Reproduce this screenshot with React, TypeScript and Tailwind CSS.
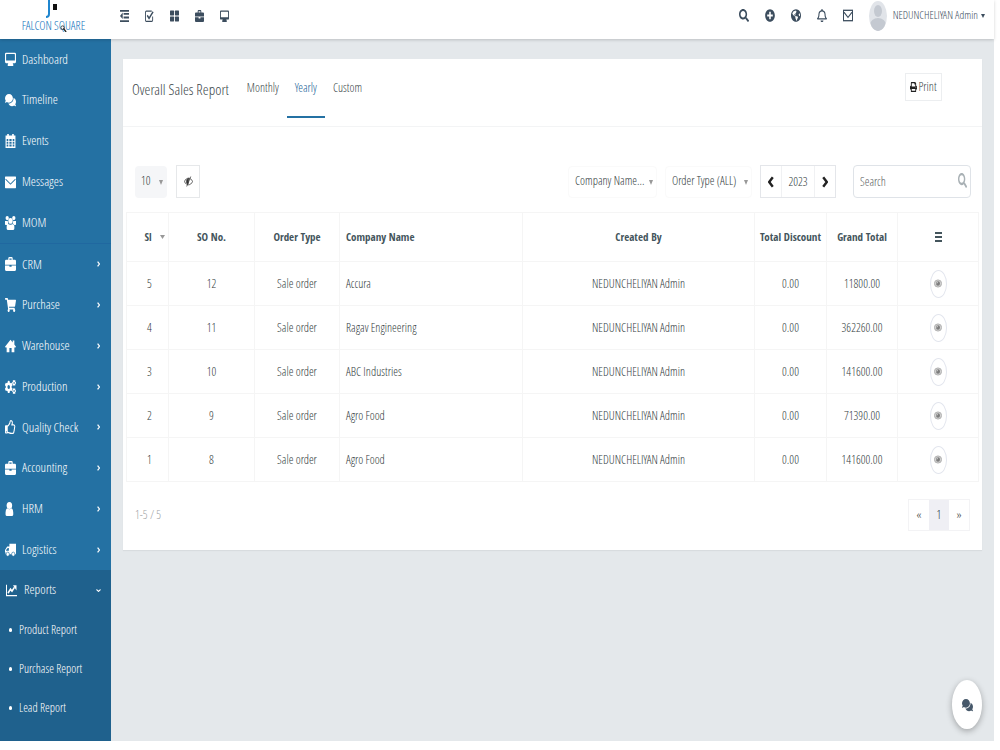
import React, { useState } from 'react';
import type { IconType } from 'react-icons';
import {
  FaCogs,
  FaComments,
  FaGlobeAmericas,
  FaPlusCircle,
  FaPrint,
  FaRegBell,
  FaRegThumbsUp,
  FaSearch,
  FaShoppingCart,
} from 'react-icons/fa';

type IconProps = { className?: string; preserveAspectRatio?: string };

interface MenuItem {
  label: string;
  icon: IconType | ((props: IconProps) => React.ReactElement);
}

interface SalesRow {
  sl: number;
  soNo: number;
  type: string;
  company: string;
  createdBy: string;
  discount: string;
  total: string;
}

function MonitorIcon(props: IconProps) {
  return (
    <svg viewBox="0 0 20 20" fill="currentColor" {...props}>
      <path
        fillRule="evenodd"
        d="M2 1h16a2 2 0 0 1 2 2v11a2 2 0 0 1-2 2h-4l1 2v2H5v-2l1-2H2a2 2 0 0 1-2-2V3a2 2 0 0 1 2-2zm1 2a1 1 0 0 0-1 1v8h16V4a1 1 0 0 0-1-1z"
      />
    </svg>
  );
}

function CalendarIcon(props: IconProps) {
  return (
    <svg viewBox="0 0 20 20" {...props}>
      <path
        fill="currentColor"
        fillRule="evenodd"
        d="M4 0h3v2h6V0h3v2h3v18H1V2h3zM3 7v3h3V7zm5 0v3h4V7zm6 0v3h3V7zM3 11v3h3v-3zm5 0v3h4v-3zm6 0v3h3v-3zM3 15v3h3v-3zm5 0v3h4v-3zm6 0v3h3v-3z"
      />
    </svg>
  );
}

function MailIcon(props: IconProps) {
  return (
    <svg viewBox="0 0 20 20" {...props}>
      <rect x="0" y="2" width="20" height="17" rx="1" fill="currentColor" />
      <path d="M1 6l9 7 9-7" fill="none" stroke="#2471a3" strokeWidth="1.5" />
    </svg>
  );
}

function MailOutlineIcon(props: IconProps) {
  return (
    <svg viewBox="0 0 20 20" fill="none" stroke="currentColor" strokeWidth="2" {...props}>
      <rect x="1" y="2" width="18" height="16" />
      <path d="M2 5l8 8 8-8" />
    </svg>
  );
}

function BriefcaseIcon(props: IconProps) {
  return (
    <svg viewBox="0 0 20 20" fill="currentColor" {...props}>
      <path
        fillRule="evenodd"
        d="M6 4V2a2 2 0 0 1 2-2h4a2 2 0 0 1 2 2v2h4a2 2 0 0 1 2 2v5H0V6a2 2 0 0 1 2-2zm2 0h4V2H8zM0 12h8v2h4v-2h8v6a2 2 0 0 1-2 2H2a2 2 0 0 1-2-2z"
      />
    </svg>
  );
}

function PeopleIcon(props: IconProps) {
  return (
    <svg viewBox="0 0 20 20" fill="currentColor" {...props}>
      <circle cx="4" cy="3" r="3" />
      <circle cx="16" cy="3" r="3" />
      <circle cx="10" cy="7" r="4" />
      <path d="M0 7h5l1 4-2 2H1q-1 0-1-2zM20 7h-5l-1 4 2 2h3q1 0 1-2zM5 11q5 3 10 0 2 1 2 4v3q0 2-2 2H5q-2 0-2-2v-3q0-3 2-4z" />
    </svg>
  );
}

function PersonIcon(props: IconProps) {
  return (
    <svg viewBox="0 0 20 20" fill="currentColor" {...props}>
      <ellipse cx="8" cy="5" rx="5" ry="5" />
      <path d="M4 9q4 3 8 0 3 1 3 6v3q0 2-2 2H3q-2 0-2-2v-3q0-5 3-6z" />
    </svg>
  );
}

function HomeIcon(props: IconProps) {
  return (
    <svg viewBox="0 0 20 20" fill="currentColor" {...props}>
      <path d="M10 1l4 4V2h3v6l3 3-1 1h-2v7h-5v-6H8v6H3v-7H1l-1-1z" />
    </svg>
  );
}

function TruckIcon(props: IconProps) {
  return (
    <svg viewBox="0 0 20 20" fill="currentColor" {...props}>
      <path fillRule="evenodd" d="M8 1h12v15H1v-2L0 13v-3l4-5h4zM7 7H5l-3 3v1h5z" />
      <circle cx="5" cy="16" r="3" stroke="#2471a3" />
      <circle cx="15" cy="16" r="3" stroke="#2471a3" />
    </svg>
  );
}

function ChartIcon(props: IconProps) {
  return (
    <svg viewBox="0 0 22 20" {...props}>
      <path d="M1 1v17h21" fill="none" stroke="currentColor" strokeWidth="2" />
      <path d="M4 14l5-6 3 3 5-6" fill="none" stroke="currentColor" strokeWidth="3" />
      <path d="M14 2h7v8z" fill="currentColor" />
    </svg>
  );
}

function DedentIcon(props: IconProps) {
  return (
    <svg viewBox="0 0 20 20" fill="currentColor" {...props}>
      <path d="M0 0h20v3H0zM8 5h12v3H8zM8 11h12v3H8zM0 17h20v3H0zM6 4v11L0 10z" />
    </svg>
  );
}

function CheckSquareIcon(props: IconProps) {
  return (
    <svg viewBox="0 0 20 20" fill="none" stroke="currentColor" {...props}>
      <path d="M17 11v6q0 2-2 2H3q-2 0-2-2V4q0-2 2-2h12" strokeWidth="2" />
      <path d="M5 9l4 5L18 3" strokeWidth="3" />
    </svg>
  );
}

function TilesIcon(props: IconProps) {
  return (
    <svg viewBox="0 0 20 20" fill="currentColor" {...props}>
      <rect x="0" y="1" width="9" height="8" rx="1" />
      <rect x="11" y="1" width="9" height="8" rx="1" />
      <rect x="0" y="11" width="9" height="8" rx="1" />
      <rect x="11" y="11" width="9" height="8" rx="1" />
    </svg>
  );
}

function MenuLinesIcon(props: IconProps) {
  return (
    <svg viewBox="0 0 7 10" fill="currentColor" {...props}>
      <path d="M0 0h7v2H0zM0 4h7v2H0zM0 8h7v2H0z" />
    </svg>
  );
}

function ArrowIcon(props: IconProps) {
  return (
    <svg viewBox="0 0 10 20" fill="none" stroke="currentColor" strokeWidth="4" {...props}>
      <path d="M2 2l6 8-6 8" />
    </svg>
  );
}

function Triangle(props: IconProps) {
  return (
    <svg viewBox="0 0 10 10" fill="currentColor" preserveAspectRatio="none" {...props}>
      <path d="M0 0h10L5 10z" />
    </svg>
  );
}

function EyeSlashIcon(props: IconProps) {
  return (
    <svg viewBox="0 0 20 20" fill="none" stroke="currentColor" {...props}>
      <path d="M1 10c4-8 14-8 18 0-4 8-14 8-18 0z" strokeWidth="1.5" />
      <path d="M11 4a6 6 0 0 0-5 9l3 2z" fill="currentColor" />
      <path d="M15 1L6 19" strokeWidth="1.5" />
    </svg>
  );
}

function EyeIcon(props: IconProps) {
  return (
    <svg viewBox="0 0 20 20" {...props}>
      <ellipse cx="10" cy="10" rx="9" ry="8" fill="#d3d3d3" stroke="#a9a9a9" strokeWidth="2" />
      <circle cx="10" cy="10" r="5" fill="#7d7d7d" />
      <path d="M10 7a3 3 0 0 0-3 3" stroke="#eee" strokeWidth="1.5" fill="none" />
    </svg>
  );
}

const mainMenu: MenuItem[] = [
  { label: 'Dashboard', icon: MonitorIcon },
  { label: 'Timeline', icon: FaComments },
  { label: 'Events', icon: CalendarIcon },
  { label: 'Messages', icon: MailIcon },
  { label: 'MOM', icon: PeopleIcon },
];

const moduleMenu: MenuItem[] = [
  { label: 'CRM', icon: BriefcaseIcon },
  { label: 'Purchase', icon: FaShoppingCart },
  { label: 'Warehouse', icon: HomeIcon },
  { label: 'Production', icon: FaCogs },
  { label: 'Quality Check', icon: FaRegThumbsUp },
  { label: 'Accounting', icon: BriefcaseIcon },
  { label: 'HRM', icon: PersonIcon },
  { label: 'Logistics', icon: TruckIcon },
];

const reportMenu = ['Product Report', 'Purchase Report', 'Lead Report'];

const quickLinks = [
  { label: 'Toggle menu', icon: DedentIcon },
  { label: 'Tasks', icon: CheckSquareIcon },
  { label: 'Apps', icon: TilesIcon },
  { label: 'Projects', icon: BriefcaseIcon },
  { label: 'Desktop', icon: MonitorIcon },
];

const userLinks = [
  { label: 'Search', icon: FaSearch },
  { label: 'Add', icon: FaPlusCircle },
  { label: 'Language', icon: FaGlobeAmericas },
  { label: 'Notifications', icon: FaRegBell },
  { label: 'Mail', icon: MailOutlineIcon },
];

const rows: SalesRow[] = [
  { sl: 5, soNo: 12, type: 'Sale order', company: 'Accura', createdBy: 'NEDUNCHELIYAN Admin', discount: '0.00', total: '11800.00' },
  { sl: 4, soNo: 11, type: 'Sale order', company: 'Ragav Engineering', createdBy: 'NEDUNCHELIYAN Admin', discount: '0.00', total: '362260.00' },
  { sl: 3, soNo: 10, type: 'Sale order', company: 'ABC Industries', createdBy: 'NEDUNCHELIYAN Admin', discount: '0.00', total: '141600.00' },
  { sl: 2, soNo: 9, type: 'Sale order', company: 'Agro Food', createdBy: 'NEDUNCHELIYAN Admin', discount: '0.00', total: '71390.00' },
  { sl: 1, soNo: 8, type: 'Sale order', company: 'Agro Food', createdBy: 'NEDUNCHELIYAN Admin', discount: '0.00', total: '141600.00' },
];

function Logo() {
  return (
    <a href="#" className="flex h-[39px] w-[111px] shrink-0 flex-col items-center bg-white pr-1 text-[#0f72bb]">
      <svg viewBox="0 0 20 19" className="h-[19px] w-5 shrink-0">
        <path d="M5 0v14q0 3-3 3" fill="none" stroke="#1f86cf" strokeWidth="2" />
        <rect x="9" y="4" width="4" height="6" fill="#111" />
      </svg>
      <span className="relative text-[12px] leading-[14px] whitespace-nowrap">
        FALCON SQUARE
        <svg viewBox="0 0 8 8" className="absolute top-[6px] left-[38px] h-[7px] w-[7px]">
          <circle cx="3" cy="3" r="2" fill="none" stroke="#333" />
          <path d="M4 4l3 4" stroke="#222" strokeWidth="1.5" />
        </svg>
      </span>
    </a>
  );
}

function SidebarLink({ item, arrow }: { item: MenuItem; arrow?: boolean }) {
  const Icon = item.icon;
  return (
    <li>
      <a href="#" className="flex h-full items-center pr-[11px] pl-[5px]">
        <Icon preserveAspectRatio="none" className="h-[14px] w-[11px] shrink-0" />
        <span className="ml-[6px] grow whitespace-nowrap">{item.label}</span>
        {arrow && <ArrowIcon preserveAspectRatio="none" className="h-[6px] w-[3px]" />}
      </a>
    </li>
  );
}

function Sidebar() {
  return (
    <nav className="flex w-[111px] shrink-0 flex-col bg-[#2471a3] text-[13px] text-white">
      <ul className="grid h-[205px] auto-rows-fr border-b border-[#2068a0]">
        {mainMenu.map((item) => (
          <SidebarLink key={item.label} item={item} />
        ))}
      </ul>
      <ul className="grid h-[326px] auto-rows-fr">
        {moduleMenu.map((item) => (
          <SidebarLink key={item.label} item={item} arrow />
        ))}
      </ul>
      <div className="grow bg-[#1f618d]">
        <a href="#" className="flex h-10 items-center pr-[11px] pl-[6px]">
          <ChartIcon preserveAspectRatio="none" className="h-[13px] w-[11px] shrink-0" />
          <span className="ml-[7px] grow">Reports</span>
          <ArrowIcon preserveAspectRatio="none" className="h-[5px] w-[3px] rotate-90" />
        </a>
        <ul className="text-[12px]">
          {reportMenu.map((label) => (
            <li key={label}>
              <a href="#" className="flex h-[39px] items-center pl-[9px] whitespace-nowrap">
                <span className="mr-[7px] h-1 w-[3px] rounded-full bg-white" />
                {label}
              </a>
            </li>
          ))}
        </ul>
      </div>
    </nav>
  );
}

function TopBar() {
  return (
    <header className="relative z-10 flex h-[39px] shrink-0 items-start bg-white text-[#3c4d5e] shadow-[0_1px_3px_rgba(0,0,0,0.18)]">
      <Logo />
      <div className="flex h-[31px] grow items-center gap-4 pl-[9px]">
        {quickLinks.map(({ label, icon: Icon }) => (
          <button key={label} aria-label={label}>
            <Icon preserveAspectRatio="none" className="h-3 w-[9px]" />
          </button>
        ))}
      </div>
      <div className="flex h-[31px] items-center gap-4">
        {userLinks.map(({ label, icon: Icon }) => (
          <button key={label} aria-label={label}>
            <Icon preserveAspectRatio="none" className="h-[13px] w-[10px]" />
          </button>
        ))}
        <button className="flex items-center pr-[9px] text-[11px] whitespace-nowrap">
          <svg viewBox="0 0 18 30" className="mr-1.5 h-[30px] w-[18px]">
            <clipPath id="avatar">
              <ellipse cx="9" cy="15" rx="9" ry="15" />
            </clipPath>
            <g clipPath="url(#avatar)">
              <rect width="18" height="30" fill="#e1e4e9" />
              <ellipse cx="9" cy="10" rx="4" ry="6" fill="#c4c9d1" />
              <ellipse cx="9" cy="24" rx="8" ry="7" fill="#c4c9d1" />
            </g>
          </svg>
          NEDUNCHELIYAN Admin
          <Triangle className="ml-[3px] h-1 w-1" />
        </button>
      </div>
    </header>
  );
}

function FilterSelect({ label, option, className }: { label: string; option: string; className: string }) {
  return (
    <div className="relative">
      <select aria-label={label} className={`block h-8 appearance-none rounded-sm pb-0.5 pl-[6px] ${className}`}>
        <option>{option}</option>
      </select>
      <Triangle className="pointer-events-none absolute top-[14px] right-1 h-[5px] w-1 text-[#999]" />
    </div>
  );
}

function Toolbar() {
  const [year, setYear] = useState(2023);

  return (
    <div className="flex items-center pr-[11px] pl-3 pt-[38px] text-[12px] text-[#333c40]">
      <FilterSelect label="Rows per page" option="10" className="w-[32px] bg-[#f5f6f8]" />
      <button aria-label="Toggle columns" className="ml-[9px] flex h-[33px] w-6 items-center justify-center border border-[#e6e8ea] text-[#333]">
        <EyeSlashIcon className="h-[11px] w-[9px]" preserveAspectRatio="none" />
      </button>
      <div className="ml-auto flex items-center gap-2">
        <FilterSelect label="Company name" option="Company Name..." className="w-[89px] border border-[#fafafa]" />
        <FilterSelect label="Order type" option="Order Type (ALL)" className="w-[87px] border border-[#fafafa]" />
        <div className="flex h-[33px] items-center border border-[#e4e6ea] text-[#222]">
          <button aria-label="Previous year" className="flex h-full w-[20px] items-center justify-center" onClick={() => setYear(year - 1)}>
            <ArrowIcon preserveAspectRatio="none" className="h-3 w-[6px] rotate-180" />
          </button>
          <span className="flex h-full w-[34px] items-center justify-center border-x border-[#f0f1f3] text-[#333c40]">{year}</span>
          <button aria-label="Next year" className="flex h-full w-[20px] items-center justify-center" onClick={() => setYear(year + 1)}>
            <ArrowIcon preserveAspectRatio="none" className="h-3 w-[6px]" />
          </button>
        </div>
        <div className="relative ml-[9px]">
          <input
            type="text"
            aria-label="Search"
            placeholder="Search"
            className="block h-[33px] w-[118px] rounded-sm border border-[#dfe3e8] pr-5 pl-[6px] placeholder:text-[#5a6063]"
          />
          <FaSearch preserveAspectRatio="none" className="absolute top-2 right-1 h-[15px] w-[9px] text-[#a9b1b5]" />
        </div>
      </div>
    </div>
  );
}

function SalesTable() {
  return (
    <div className="px-[3px] pt-[14px]">
      <table className="w-full table-fixed border-collapse text-center text-[12px] text-[#333c40] [&_td]:border [&_td]:border-[#f5f5f5] [&_th]:border [&_th]:border-[#f5f5f5]">
        <colgroup>
          <col className="w-[42px]" />
          <col className="w-[86px]" />
          <col className="w-[85px]" />
          <col className="w-[183px]" />
          <col />
          <col className="w-[72px]" />
          <col className="w-[71px]" />
          <col className="w-[81px]" />
        </colgroup>
        <thead className="font-['Open_Sans_Condensed','Liberation_Sans_Narrow',sans-serif] text-[11px] font-bold text-[#44555c]">
          <tr className="h-[49px]">
            <th>
              <span className="flex items-center justify-center pl-[14px]">
                Sl
                <Triangle className="ml-2 h-1 w-[5px] text-[#999]" />
              </span>
            </th>
            <th>SO No.</th>
            <th>Order Type</th>
            <th className="pl-[6px] text-left">Company Name</th>
            <th>Created By</th>
            <th className="whitespace-nowrap">Total Discount</th>
            <th className="whitespace-nowrap">Grand Total</th>
            <th aria-label="Actions">
              <MenuLinesIcon className="mx-auto h-[10px] w-[7px]" />
            </th>
          </tr>
        </thead>
        <tbody>
          {rows.map((row) => (
            <tr key={row.sl} className="h-[44px]">
              <td className="pl-1">{row.sl}</td>
              <td>{row.soNo}</td>
              <td>{row.type}</td>
              <td className="pl-[6px] text-left">{row.company}</td>
              <td>{row.createdBy}</td>
              <td>{row.discount}</td>
              <td>{row.total}</td>
              <td>
                <button aria-label="View" className="mx-auto flex h-7 w-[17px] items-center justify-center rounded-[50%] border border-[#e3e6ee]">
                  <EyeIcon preserveAspectRatio="none" className="h-[9px] w-2" />
                </button>
              </td>
            </tr>
          ))}
        </tbody>
      </table>
    </div>
  );
}

export default function App() {
  const [tab, setTab] = useState('Yearly');

  return (
    <div className="flex h-screen flex-col bg-white pr-[6px] pb-[9px] font-['Open_Sans_Condensed_Light','Liberation_Sans_Narrow','Open_Sans',sans-serif]">
      <TopBar />
      <div className="flex min-h-0 grow">
        <Sidebar />
        <main className="grow bg-[#e4e8eb] px-3 pt-5">
          <section className="bg-white pb-[19px] shadow-[0_1px_1px_rgba(0,0,0,0.05)]">
            <div className="flex h-[68px] items-start border-b border-[#f3f4f5] pl-[9px] text-[12px] text-[#3c484a]">
              <h1 className="mr-[10px] text-[15px] leading-[60px] whitespace-nowrap">Overall Sales Report</h1>
              {['Monthly', 'Yearly', 'Custom'].map((name) => (
                <button
                  key={name}
                  onClick={() => setTab(name)}
                  className={
                    name === tab
                      ? 'h-[59px] border-b-2 border-[#2471a3] px-2 text-[#1a6397]'
                      : 'h-[59px] border-b-2 border-transparent px-2'
                  }
                >
                  {name}
                </button>
              ))}
              <button className="mt-[14px] mr-10 ml-auto flex h-7 w-[37px] items-center justify-center gap-px border border-[#eceef0]">
                <FaPrint preserveAspectRatio="none" className="h-[10px] w-[7px] text-[#222]" />
                Print
              </button>
            </div>
            <Toolbar />
            <SalesTable />
            <div className="flex items-center justify-between px-3 pt-[17px] text-[12px] text-[#a0a3a5]">
              <span>1-5 / 5</span>
              <div className="flex h-8 items-center border border-[#f3f3f5] text-[#444]">
                <button aria-label="Previous page" className="h-full w-5">«</button>
                <button className="h-full w-5 bg-[#efeff4] text-[#22333a]">1</button>
                <button aria-label="Next page" className="h-full w-5">»</button>
              </div>
            </div>
          </section>
        </main>
      </div>
      <button
        aria-label="Open chat"
        className="fixed right-[18px] bottom-[21px] z-20 flex h-[49px] w-[30px] items-center justify-center rounded-[50%] bg-white text-[#46586a] shadow-[0_2px_6px_rgba(0,0,0,0.3)]"
      >
        <FaComments preserveAspectRatio="none" className="h-[14px] w-[11px]" />
      </button>
    </div>
  );
}
